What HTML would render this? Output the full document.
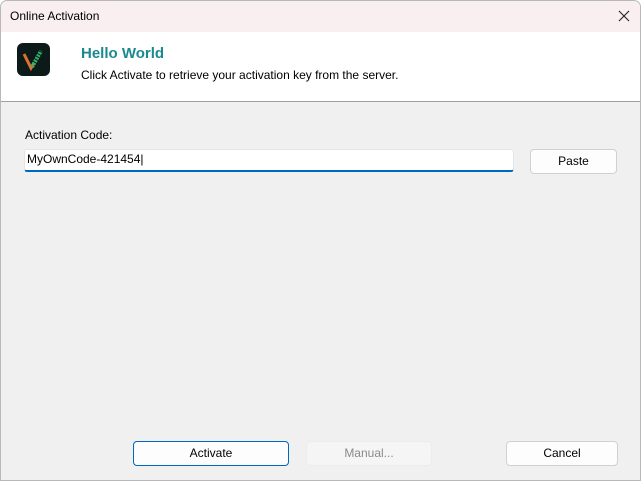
<!DOCTYPE html>
<html><head><meta charset="utf-8"><style>
*{margin:0;padding:0;box-sizing:border-box}
body{width:642px;height:482px;overflow:hidden;background:#fff;font-family:"Segoe UI","Liberation Sans",sans-serif;font-size:12px;color:#000;position:relative}
.win{position:absolute;left:0;top:0;width:641px;height:481px;border:1px solid #b8b8b8;border-radius:7px 7px 0 0;overflow:hidden;background:#f0f0f0}
.title{position:absolute;left:0;top:0;width:100%;height:31px;background:#f9eef0;}
.title span{position:absolute;left:9px;top:8px;font-size:12px}
.close{position:absolute;left:617px;top:9px}
.head{position:absolute;left:0;top:31px;width:100%;height:70px;background:#fff;border-bottom:1px solid #a0a0a0}
.logo{position:absolute;left:16px;top:11px;width:33px;height:33px;border-radius:6px;background:#0d1a1a}
.h1{position:absolute;left:80px;top:13px;font-size:15px;font-weight:bold;color:#1a8a8e}
.sub{position:absolute;left:80px;top:36px;font-size:12px}
.lbl{position:absolute;left:24px;top:127px}
.inp{position:absolute;left:23px;top:148px;width:490px;height:23px;background:#fff;border:1px solid #e5e5e5;border-bottom:2px solid #0067c0;border-radius:3px}
.inp span{position:absolute;left:2px;top:2px;font-size:12px}
.btn{position:absolute;height:25px;background:#fdfdfd;border:1px solid #d0d0d0;border-radius:4px;text-align:center;line-height:23px;font-size:12px}
</style></head><body>
<div class="win">
<div class="title"><span>Online Activation</span>
<svg class="close" width="12" height="12" viewBox="0 0 12 12"><path d="M1 1L11 11M11 1L1 11" stroke="#222" stroke-width="1.1"/></svg></div>
<div class="head">
<div class="logo"><svg width="33" height="33" viewBox="0 0 33 33"><path d="M7 11L14 25L17 20" stroke="#e2702a" stroke-width="3" fill="none"/><path d="M15 24L24 8" stroke="#2fb36a" stroke-width="4" stroke-dasharray="2 1" fill="none"/></svg></div>
<div class="h1">Hello World</div>
<div class="sub">Click Activate to retrieve your activation key from the server.</div>
</div>
<div class="lbl">Activation Code:</div>
<div class="inp"><span>MyOwnCode-421454|</span></div>
<div class="btn" style="left:529px;top:148px;width:87px">Paste</div>
<div class="btn" style="left:132px;top:440px;width:156px;border-color:#0067c0">Activate</div>
<div class="btn" style="left:305px;top:440px;width:126px;background:#f5f5f5;border-color:#ececec;color:#8a8a8a">Manual...</div>
<div class="btn" style="left:505px;top:440px;width:112px">Cancel</div>
</div>
</body></html>
